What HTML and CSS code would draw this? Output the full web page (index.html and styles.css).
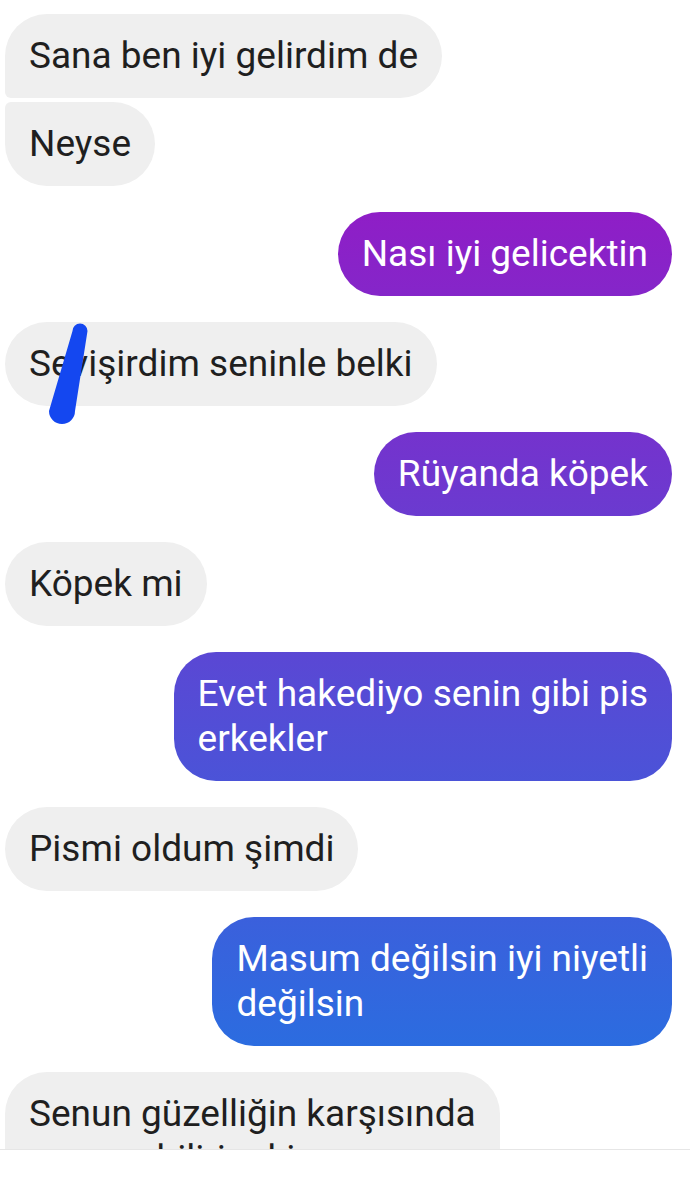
FILE: index.html
```html
<!DOCTYPE html>
<html lang="tr">
  <head>
    <meta charset="UTF-8" />
    <meta name="viewport" content="width=device-width, initial-scale=1.0" />
    <title>Sohbet</title>
    <link rel="stylesheet" href="styles.css">
  </head>
  <body>
    <main class="chat">
      <div class="group">
        <div class="bubble in first">Sana ben iyi gelirdim de</div>
        <div class="bubble in last">Neyse</div>
      </div>
      <div class="bubble out">Nası iyi gelicektin</div>
      <div class="bubble in marked">
        Sevişirdim seninle belki
        <svg class="marker" viewBox="45 321 50 110" width="50" height="110">
          <path d="M72.5 330 A7.5 7.5 0 0 1 87.5 330 L75 410 A13 13 0 0 1 49 410 Z" fill="#1447f0" />
        </svg>
      </div>
      <div class="bubble out">Rüyanda köpek</div>
      <div class="bubble in">Köpek mi</div>
      <div class="bubble out">Evet hakediyo senin gibi pis<br>erkekler</div>
      <div class="bubble in">Pismi oldum şimdi</div>
      <div class="bubble out">Masum değilsin iyi niyetli<br>değilsin</div>
      <div class="bubble in">Senun güzelliğin karşısında<br>ne yapabilirim ki</div>
    </main>
    <div class="composer"></div>
  </body>
</html>
```

FILE: styles.css
```css
body {
  margin: 0;

  --gray: #efefef;
  --text: #1f1f1f;
  --line: #e6e6e6;

  font-family: Roboto, "Noto Sans", sans-serif;
  background-color: #ffffff;
}

.chat {
  height: 1150px;
  overflow: hidden;
  display: flex;
  flex-direction: column;
  gap: 26px;
  padding: 14px 18px 0 5px;
  box-sizing: border-box;
  border-bottom: 1px solid var(--line);
}

.group {
  display: flex;
  flex-direction: column;
  gap: 4px;
}

.bubble {
  flex-shrink: 0;
  width: fit-content;
  padding: 19px 24px 20px;
  font-size: 37px;
  line-height: 45px;
  border-radius: 42px;
  box-sizing: border-box;
}

.in {
  align-self: flex-start;
  background-color: var(--gray);
  color: var(--text);
}

.out {
  align-self: flex-end;
  color: #ffffff;
  background: linear-gradient(180deg, #a80ac0 0%, #1b79e4 100%) fixed;
}

.first {
  border-bottom-left-radius: 6px;
}

.last {
  border-top-left-radius: 6px;
}

.marked {
  position: relative;
}

.marker {
  position: absolute;
  left: 40px;
  top: 0;
}

.composer {
  height: 33px;
}
```
